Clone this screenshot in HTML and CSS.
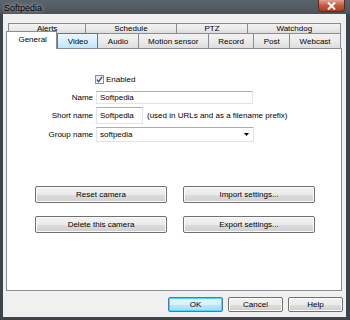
FILE: index.html
```html
<!DOCTYPE html>
<html lang="en">
<head>
    <meta charset="UTF-8">
    <title>Softpedia</title>
    <link rel="stylesheet" href="styles.css">
</head>
<body>
    <div class="window">
        <div class="titlebar">
            <span class="title">Softpedia</span>
            <span class="close">
                <svg width="9" height="8" viewBox="0 0 9 8"><path d="M1 0.5 L8 7.5 M8 0.5 L1 7.5" stroke="#fff" stroke-width="2"/></svg>
            </span>
        </div>
        <div class="client">
            <div class="tabs">
                <div class="tabrow back">
                    <div class="tab">Alerts</div>
                    <div class="tab">Schedule</div>
                    <div class="tab">PTZ</div>
                    <div class="tab">Watchdog</div>
                </div>
                <div class="tabrow front">
                    <div class="tab selected">General</div>
                    <div class="tab hover">Video</div>
                    <div class="tab">Audio</div>
                    <div class="tab">Motion sensor</div>
                    <div class="tab">Record</div>
                    <div class="tab">Post</div>
                    <div class="tab">Webcast</div>
                </div>
            </div>
            <div class="panel">
                <div class="form">
                    <span></span>
                    <label class="check">
                        <span class="box">
                            <svg width="7" height="7" viewBox="0 0 7 7"><path d="M0.8 3.6 L2.6 5.6 L6.2 0.8" fill="none" stroke="#3b4f8a" stroke-width="1.4"/></svg>
                        </span>
                        Enabled
                    </label>

                    <label class="name">Name</label>
                    <div class="field wide">Softpedia</div>

                    <label class="name">Short name</label>
                    <div class="inline">
                        <div class="field short">Softpedia</div>
                        <span class="hint">(used in URLs and as a filename prefix)</span>
                    </div>

                    <label class="name">Group name</label>
                    <div class="field select">
                        <span>softpedia</span>
                        <svg width="5" height="3" viewBox="0 0 5 3"><path d="M0 0 H5 L2.5 3 Z" fill="#000"/></svg>
                    </div>
                </div>

                <div class="actions">
                    <button>Reset camera</button>
                    <button>Import settings...</button>
                    <button>Delete this camera</button>
                    <button>Export settings...</button>
                </div>
            </div>
            <div class="footer">
                <button class="default">OK</button>
                <button>Cancel</button>
                <button>Help</button>
            </div>
        </div>
    </div>
</body>
</html>
```

FILE: styles.css
```css
body {
    margin: 0;
    font-family: "Liberation Sans", Arial, sans-serif;
    font-size: 8px;
    color: #000;
}
.window {
    width: 350px;
    height: 320px;
    background: #3d444b;
    display: flex;
    flex-direction: column;
}
.titlebar {
    height: 14px;
    display: flex;
    align-items: flex-start;
    justify-content: space-between;
    background: linear-gradient(#5b646c, #4a525a);
}
.title {
    margin: 3px 0 0 4px;
    font-size: 9px;
    line-height: 10px;
    color: #000;
    text-shadow: 0 0 4px rgba(255, 255, 255, 0.9);
}
.close {
    width: 27px;
    height: 12px;
    margin-right: 5px;
    display: flex;
    align-items: center;
    justify-content: center;
    border: 1px solid #5a2a22;
    border-top: none;
    border-radius: 0 0 4px 4px;
    box-sizing: border-box;
    background: linear-gradient(#e0a293, #c45a40 50%, #b23b1f);
}
.client {
    flex: 1;
    margin: 0 4px 3px 3px;
    background: #f0f0f0;
    display: flex;
    flex-direction: column;
}
.tabs {
    margin: 9px 5px 0 5px;
}
.tabrow {
    display: flex;
}
.tabrow.back {
    height: 10px;
}
.tabrow.front {
    height: 15px;
    position: relative;
}
.tab {
    flex: 1 1 auto;
    display: flex;
    align-items: center;
    justify-content: center;
    border: 1px solid #898c95;
    border-left: none;
    border-bottom: none;
    background: linear-gradient(#f2f2f2, #ebebeb 50%, #dddddd);
    box-sizing: border-box;
    white-space: nowrap;
    line-height: 9px;
}
.tab:first-child {
    border-left: 1px solid #898c95;
}
.tabrow.back .tab {
    align-items: flex-start;
    padding-top: 0;
}
.tab.hover {
    background: linear-gradient(#eaf6fd, #d9f0fc 50%, #bee6fd);
    border: 1px solid #3c7fb1;
    border-bottom: none;
}
.tab.selected {
    background: #fff;
    margin: -2px 0 -1px -2px;
    padding: 0 0 2px 2px;
    height: 18px;
    position: relative;
    z-index: 2;
}
.panel {
    height: 243px;
    margin: 0 4px 0 3px;
    background: #fff;
    border: 1px solid #898c95;
    box-sizing: border-box;
    position: relative;
}
.form {
    display: grid;
    grid-template-columns: 86px 1fr;
    column-gap: 3px;
    row-gap: 3px;
    align-items: center;
    margin-top: 24px;
}
.name {
    text-align: right;
}
.check {
    display: flex;
    align-items: center;
    gap: 2px;
    height: 12px;
    margin-left: -1px;
    margin-bottom: 3px;
}
.box {
    width: 9px;
    height: 9px;
    box-sizing: border-box;
    border: 1px solid #8e8f8f;
    background: linear-gradient(135deg, #e4e4e4, #fdfdfd);
    display: flex;
    align-items: center;
    justify-content: center;
}
.field {
    height: 13px;
    box-sizing: border-box;
    border: 1px solid #e2e3ea;
    border-top-color: #abadb3;
    background: #fff;
    padding-left: 3px;
    display: flex;
    align-items: center;
}
.field.wide {
    width: 157px;
}
.inline {
    display: flex;
    align-items: center;
    gap: 4px;
}
.field.short {
    width: 47px;
    height: 17px;
}
.field.select {
    width: 158px;
    height: 15px;
    justify-content: space-between;
    padding-right: 4px;
}
.actions {
    display: grid;
    grid-template-columns: 132px 132px;
    column-gap: 16px;
    row-gap: 13px;
    margin: 44px 0 0 28px;
}
button {
    font-family: "Liberation Sans", Arial, sans-serif;
    font-size: 8px;
    color: #000;
    height: 17px;
    padding: 0;
    border: 1px solid #707070;
    border-radius: 2px;
    background: linear-gradient(#f2f2f2, #ebebeb 50%, #dddddd 51%, #cfcfcf);
    box-shadow: inset 0 0 0 1px #fbfbfb;
}
.footer {
    display: flex;
    justify-content: flex-end;
    gap: 5px;
    padding: 6px 3px 0 0;
}
.footer button {
    width: 55px;
    height: 15px;
}
.footer button.default {
    border-color: #3c7fb1;
    box-shadow: inset 0 0 0 1px #48d8fb;
    background: linear-gradient(#eaf6fd, #d9f0fc 50%, #bee6fd 51%, #a7d9f5);
}
```
